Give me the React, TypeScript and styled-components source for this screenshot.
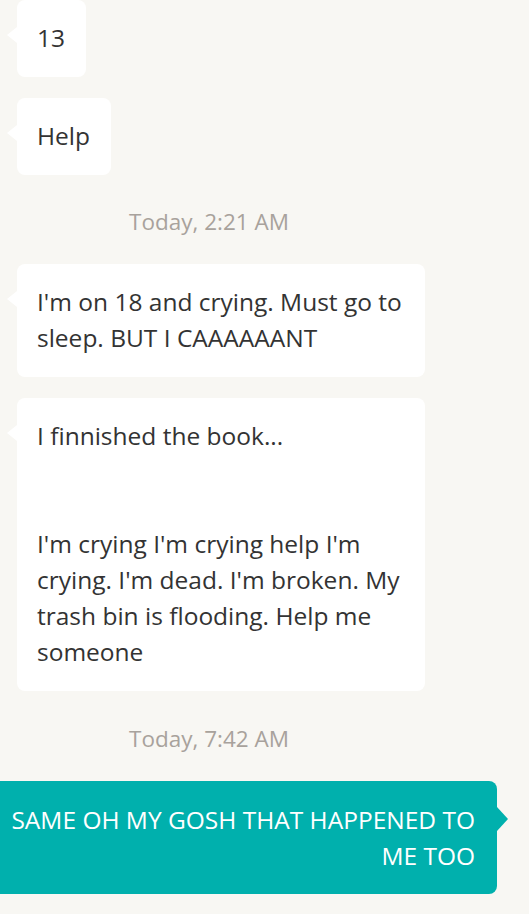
import React from "react";
import styled, { createGlobalStyle, css } from "styled-components";

const Global = createGlobalStyle`
  html, body { margin: 0; padding: 0; background: #f8f7f3; }
  body { font-family: "Open Sans", "Noto Sans", sans-serif; overflow: hidden; }
`;

const Thread = styled.div`
  display: flex;
  flex-direction: column;
  width: 529px;
  height: 914px;
  overflow: hidden;
`;

const Row = styled.div<{ $mine?: boolean; $gap?: number }>`
  display: flex;
  justify-content: ${(p) => (p.$mine ? "flex-end" : "flex-start")};
  padding: ${(p) => (p.$mine ? "0 32px 0 0" : "0 0 0 17px")};
  margin-top: ${(p) => p.$gap ?? 0}px;
`;

const Bubble = styled.div<{ $mine?: boolean }>`
  position: relative;
  box-sizing: border-box;
  max-width: 408px;
  padding: 20px 21px 21px 20px;
  border-radius: 8px;
  background: #ffffff;
  color: #333333;
  font-size: 24.5px;
  line-height: 36px;
  white-space: pre-line;

  &::before {
    content: "";
    position: absolute;
    top: 27px;
    left: -10px;
    border-style: solid;
    border-width: 8px 10px 8px 0;
    border-color: transparent #ffffff transparent transparent;
  }

  ${(p) =>
    p.$mine &&
    css`
      max-width: none;
      width: 507px;
      margin-left: -10px;
      padding: 21px 22px 20px 4px;
      background: #00b0ad;
      color: #ffffff;
      text-align: right;

      &::before {
        left: auto;
        right: -11px;
        top: 26px;
        border-width: 12px 0 12px 11px;
        border-color: transparent transparent transparent #00b0ad;
      }
    `}
`;

const Stamp = styled.div<{ $top: number }>`
  width: 418px;
  margin-top: ${(p) => p.$top}px;
  margin-bottom: 27px;
  text-align: center;
  font-size: 22.5px;
  line-height: 30px;
  color: #a8a29c;
`;

export default function App() {
  return (
    <Thread>
      <Global />
      <Row>
        <Bubble>13</Bubble>
      </Row>
      <Row $gap={21}>
        <Bubble>Help</Bubble>
      </Row>
      <Stamp $top={32}>Today, 2:21 AM</Stamp>
      <Row>
        <Bubble>I'm on 18 and crying. Must go to sleep. BUT I CAAAAAANT</Bubble>
      </Row>
      <Row $gap={21}>
        <Bubble>{"I finnished the book...\n\n\nI'm crying I'm crying help I'm crying. I'm dead. I'm broken. My trash bin is flooding. Help me someone"}</Bubble>
      </Row>
      <Stamp $top={33}>Today, 7:42 AM</Stamp>
      <Row $mine>
        <Bubble $mine>SAME OH MY GOSH THAT HAPPENED TO ME TOO</Bubble>
      </Row>
    </Thread>
  );
}
